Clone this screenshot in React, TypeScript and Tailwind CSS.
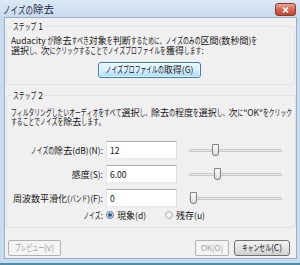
import React from "react";

const KANA = /[\u3000-\u30ff\uff01-\uff0f\uff1a]/;
const KANJI = /[\u4e00-\u9fff]/;

// Meiryo UI style: kanji full width, kana condensed (small font, stretched up)
function J({ t, big }: { t: string; big?: boolean }) {
  const parts: React.ReactNode[] = [];
  let ascii = "";
  const flush = (k: number) => {
    if (ascii) {
      parts.push(
        <span key={`a${k}`} className={big ? "text-[9.5px]" : "text-[8.5px]"}>
          {ascii}
        </span>
      );
      ascii = "";
    }
  };
  Array.from(t).forEach((c, i) => {
    if (KANA.test(c)) {
      flush(i);
      parts.push(
        <span
          key={i}
          className={
            big
              ? "inline-block text-[7.5px] scale-y-[1.4] -translate-y-[0.5px]"
              : "inline-block text-[5.8px] scale-y-[1.5] -translate-y-[0.8px]"
          }
        >
          {c}
        </span>
      );
    } else if (KANJI.test(c)) {
      flush(i);
      parts.push(
        <span key={i} className={big ? "inline-block text-[10.5px]" : "inline-block text-[9px]"}>
          {c}
        </span>
      );
    } else {
      ascii += c;
    }
  });
  flush(t.length);
  return <>{parts}</>;
}

const rows = [
  { label: "ノイズの除去(dB)(N):", value: "12", thumb: "left-[23px]" },
  { label: "感度(S):", value: "6.00", thumb: "left-[25px]" },
  { label: "周波数平滑化(バンド)(F):", value: "0", thumb: "left-[1px]" },
];

function Slider({ thumb }: { thumb: string }) {
  return (
    <div className="relative ml-[12px] w-[93px] h-[14px] flex items-center">
      <div className="w-full h-[3px] border border-[#c8c8c8] bg-[#e7eaea] rounded-[1px]" />
      <div
        className={`absolute top-[1px] ${thumb} w-[7px] h-[12px] border border-[#7f8387] rounded-b-[4px] rounded-t-[1px] bg-gradient-to-b from-[#fbfbfb] to-[#dedede]`}
      />
    </div>
  );
}

function Radio({ checked }: { checked?: boolean }) {
  return (
    <span
      className={`w-[8px] h-[8px] shrink-0 rounded-full border flex items-center justify-center ${
        checked ? "border-[#5d7a96] bg-[#dde8f2]" : "border-[#a9adb1] bg-[#eef0f2]"
      }`}
    >
      {checked && <span className="w-[4px] h-[4px] rounded-full bg-[#2e5a85]" />}
    </span>
  );
}

export default function App() {
  return (
    <div className="w-[300px] h-[265px] flex flex-col bg-[#c8dbef] font-['Noto_Sans_CJK_JP','Noto_Sans',sans-serif] text-[9px] leading-[10px] text-[#141414] overflow-hidden">
      {/* title bar */}
      <div className="h-[17px] shrink-0 flex items-start justify-between pl-[3px] pr-[4px] bg-gradient-to-b from-[#dbe8f6] to-[#c8dbef]">
        <span className="mt-[3px] h-[12px] text-[10.5px] leading-[12px] whitespace-nowrap text-[#1b2838]">
          <J t="ノイズの除去" big />
        </span>
        <div className="mt-[3px] w-[21px] h-[13px] rounded-[3px] border border-[#8b3b2e] bg-gradient-to-b from-[#e9a896] via-[#d46550] to-[#c2432f] flex items-center justify-center">
          <svg width="7" height="6" viewBox="0 0 7 6">
            <path d="M1 0.5 L6 5.5 M6 0.5 L1 5.5" stroke="#fff" strokeWidth="1.6" />
          </svg>
        </div>
      </div>

      {/* client area */}
      <div className="h-[242px] shrink-0 ml-[4px] mr-[3px] border border-[#98aec4] bg-[#f0f0f0] flex flex-col px-[1px]">
        <fieldset className="mt-[3px] border border-[#dde3e8] rounded-[3px] pl-[4px] pr-[3px] pb-[6px]">
          <legend className="ml-[1px] px-[1px] h-[10px] leading-[10px] whitespace-nowrap">
            <J t="ステップ 1" />
          </legend>
          <div className="mt-[4px] whitespace-nowrap">
            <div className="h-[10px]">
              <J t="Audacity が除去すべき対象を判断するために、ノイズのみの区間(数秒間)を" />
            </div>
            <div className="h-[10px]">
              <J t="選択し、次にクリックすることでノイズプロファイルを獲得します:" />
            </div>
          </div>
          <div className="mt-[7px] flex">
            <button className="ml-[87px] w-[103px] h-[16px] rounded-[3px] border border-[#3c7fb1] bg-gradient-to-b from-[#eaf6fd] via-[#d9f0fc] to-[#a7d9f5] text-[9px] leading-[10px] text-[#141414] whitespace-nowrap shadow-[inset_0_0_0_1px_rgba(255,255,255,0.6)]">
              <J t="ノイズプロファイルの取得(G)" />
            </button>
          </div>
        </fieldset>

        <fieldset className="mt-[5px] border border-[#dde3e8] rounded-[3px] pl-[4px] pr-[3px] pb-[7px]">
          <legend className="ml-[1px] px-[1px] h-[10px] leading-[10px] whitespace-nowrap">
            <J t="ステップ 2" />
          </legend>
          <div className="mt-[7px] whitespace-nowrap">
            <div className="h-[10px]">
              <J t={'フィルタリングしたいオーディオをすべて選択し、除去の程度を選択し、次に"OK"をクリック'} />
            </div>
            <div className="h-[10px]">
              <J t="することでノイズを除去します。" />
            </div>
          </div>
          <div className="mt-[11px] flex flex-col">
            {rows.map((r) => (
              <div key={r.label} className="h-[24px] flex items-center">
                <span className="w-[92px] h-[10px] text-right whitespace-nowrap">
                  <J t={r.label} />
                </span>
                <div className="ml-[3px] w-[71px] h-[18px] border border-[#abadb3] border-l-[#e2e3ea] border-r-[#dbdfe6] border-b-[#e3e9ef] bg-white flex items-center pl-[3px] text-[8.5px]">
                  {r.value}
                </div>
                <Slider thumb={r.thumb} />
              </div>
            ))}
            <div className="h-[10px] flex items-center">
              <span className="w-[92px] h-[10px] text-right whitespace-nowrap">
                <J t="ノイズ:" />
              </span>
              <div className="ml-[3px] w-[59px] flex items-center gap-[3px] whitespace-nowrap">
                <Radio checked />
                <span className="h-[10px]">
                  <J t="現象(d)" />
                </span>
              </div>
              <div className="flex items-center gap-[3px] whitespace-nowrap">
                <Radio />
                <span className="h-[10px]">
                  <J t="残存(u)" />
                </span>
              </div>
            </div>
          </div>
        </fieldset>

        <div className="mt-[12px] flex items-center">
          <button className="ml-[2px] w-[53px] h-[16px] rounded-[2px] border border-[#adb2b5] bg-[#f4f4f4] text-[#a0a0a0] leading-[10px] whitespace-nowrap">
            <J t="プレビュー(v)" />
          </button>
          <button className="ml-auto w-[34px] h-[16px] rounded-[2px] border border-[#adb2b5] bg-[#f4f4f4] text-[#a0a0a0] text-[8px] leading-[10px]">
            OK(O)
          </button>
          <button className="ml-[5px] mr-[5px] w-[56px] h-[16px] rounded-[3px] border border-[#707070] bg-gradient-to-b from-[#f2f2f2] via-[#e4e4e4] to-[#cfcfcf] text-[#141414] leading-[10px] whitespace-nowrap">
            <J t="キャンセル(C)" />
          </button>
        </div>
      </div>

      {/* bottom frame */}
      <div className="flex-1 flex flex-col justify-end">
        <div className="h-[2px] bg-[#4f8da6]" />
      </div>
    </div>
  );
}
